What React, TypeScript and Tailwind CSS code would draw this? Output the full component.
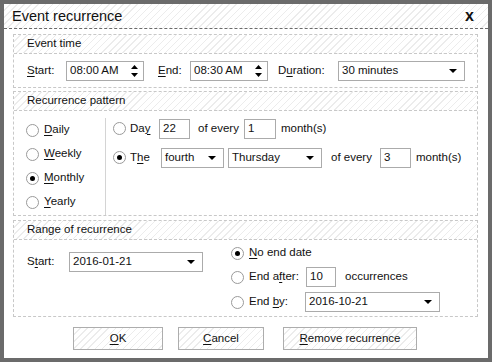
import React from "react";

const hatch =
  "bg-[repeating-linear-gradient(135deg,#ffffff_0px,#ffffff_4px,#ececec_4px,#ececec_5px)]";

function U({ pre = "", k, post = "" }: { pre?: string; k: string; post?: string }) {
  return (
    <span className="whitespace-nowrap">
      {pre}
      <span className="underline underline-offset-[2px]">{k}</span>
      {post}
    </span>
  );
}

function Radio({ checked = false }: { checked?: boolean }) {
  return (
    <span className="w-[13px] h-[13px] shrink-0 rounded-full border border-[#9a9a9a] bg-white flex items-center justify-center">
      {checked && <span className="w-[5px] h-[5px] rounded-full bg-black" />}
    </span>
  );
}

function Caret() {
  return (
    <svg width="8" height="4" viewBox="0 0 8 4" className="shrink-0">
      <path d="M0 0 H8 L4 4 Z" fill="#000" />
    </svg>
  );
}

function Input({ w, value }: { w: string; value: string }) {
  return (
    <div className={`${w} h-[20px] shrink-0 border border-[#ababab] bg-white flex items-center pl-[3px]`}>
      {value}
    </div>
  );
}

function Select({ w, value }: { w: string; value: string }) {
  return (
    <div className={`${w} h-[20px] shrink-0 border border-[#ababab] bg-white flex items-center justify-between pl-[3px] pr-[7px]`}>
      <span>{value}</span>
      <Caret />
    </div>
  );
}

function Spin({ value }: { value: string }) {
  return (
    <div className="w-[78px] h-[20px] shrink-0 border border-[#ababab] bg-white flex items-center justify-between pl-[3px] pr-[5px]">
      <span>{value}</span>
      <svg width="7" height="12" viewBox="0 0 7 12">
        <path d="M3.5 0 L7 4 H0 Z" fill="#000" />
        <path d="M0 8 H7 L3.5 12 Z" fill="#000" />
      </svg>
    </div>
  );
}

function Header({ children }: { children: React.ReactNode }) {
  return (
    <div className={`h-[19px] ${hatch} border-b border-dashed border-[#c8c8c8] pl-[13px] flex items-center`}>
      {children}
    </div>
  );
}

function Button({ w, children }: { w: string; children: React.ReactNode }) {
  return (
    <div className={`${w} h-[23px] border border-[#adadad] ${hatch} flex items-center justify-center`}>
      {children}
    </div>
  );
}

export default function App() {
  return (
    <div
      className="w-[492px] h-[362px] bg-[#6b6b6b] p-[4px] text-[11.5px] text-[#111]"
      style={{ fontFamily: '"Segoe UI", "Liberation Sans", Arial, sans-serif' }}
    >
      <div className="w-full h-full bg-white flex flex-col">
        {/* Title bar */}
        <div className={`h-[25px] shrink-0 ${hatch} border-b border-dashed border-[#6b6b6b] flex items-center justify-between pl-[8px] pr-[14px]`}>
          <span className="text-[14.5px] leading-none">Event recurrence</span>
          <span className="text-[16px] font-bold leading-none">x</span>
        </div>

        <div className="pl-[9px] pr-[10px] pt-[5px] flex flex-col">
          {/* Event time */}
          <div className="border border-dashed border-[#c8c8c8] flex flex-col">
            <Header>Event time</Header>
            <div className="h-[33px] flex items-center pl-[13px]">
              <span className="w-[39px]"><U k="S" post="tart:" /></span>
              <Spin value="08:00 AM" />
              <span className="w-[32px] ml-[14px]"><U k="E" post="nd:" /></span>
              <Spin value="08:30 AM" />
              <span className="w-[60px] ml-[10px]"><U pre="D" k="u" post="ration:" /></span>
              <Select w="w-[127px]" value="30 minutes" />
            </div>
          </div>

          {/* Recurrence pattern */}
          <div className="mt-[3px] h-[125px] border border-dashed border-[#c8c8c8] flex flex-col">
            <Header>Recurrence pattern</Header>
            <div className="flex flex-1">
              <div className="w-[92px] border-r border-[#d4d4d4] mt-[7px] pl-[12px] flex flex-col">
                <div className="h-[24px] flex items-center gap-[5px]"><Radio /><U k="D" post="aily" /></div>
                <div className="h-[24px] flex items-center gap-[5px]"><Radio /><U k="W" post="eekly" /></div>
                <div className="h-[24px] flex items-center gap-[5px]"><Radio checked /><U k="M" post="onthly" /></div>
                <div className="h-[24px] flex items-center gap-[5px]"><Radio /><U k="Y" post="early" /></div>
              </div>
              <div className="flex flex-col pl-[7px] pt-[7px]">
                <div className="h-[21px] flex items-center">
                  <Radio />
                  <span className="w-[29px] ml-[4px]"><U pre="Da" k="y" /></span>
                  <Input w="w-[31px]" value="22" />
                  <span className="w-[46px] ml-[8px]">of every</span>
                  <Input w="w-[32px]" value="1" />
                  <span className="ml-[5px]">month(s)</span>
                </div>
                <div className="h-[21px] mt-[8px] flex items-center">
                  <Radio checked />
                  <span className="w-[31px] ml-[4px]"><U pre="T" k="h" post="e" /></span>
                  <Select w="w-[63px]" value="fourth" />
                  <Select w="w-[94px] ml-[4px]" value="Thursday" />
                  <span className="w-[49px] ml-[9px]">of every</span>
                  <Input w="w-[31px]" value="3" />
                  <span className="ml-[5px]">month(s)</span>
                </div>
              </div>
            </div>
          </div>

          {/* Range of recurrence */}
          <div className="mt-[4px] h-[97px] border border-dashed border-[#c8c8c8] flex flex-col">
            <Header>Range of recurrence</Header>
            <div className="flex">
              <div className="w-[217px] pl-[13px] pt-[12px] flex items-start">
                <div className="h-[20px] flex items-center">
                  <span className="w-[42px]"><U pre="S" k="t" post="art:" /></span>
                  <Select w="w-[134px]" value="2016-01-21" />
                </div>
              </div>
              <div className="flex flex-col pt-[1px]">
                <div className="h-[24px] flex items-center">
                  <Radio checked />
                  <span className="ml-[5px]"><U k="N" post="o end date" /></span>
                </div>
                <div className="h-[24px] flex items-center">
                  <Radio />
                  <span className="ml-[5px] w-[57px]"><U pre="End a" k="f" post="ter:" /></span>
                  <Input w="w-[30px]" value="10" />
                  <span className="ml-[9px]">occurrences</span>
                </div>
                <div className="h-[24px] mt-[1px] flex items-center">
                  <Radio />
                  <span className="ml-[5px] w-[56px]"><U pre="End " k="b" post="y:" /></span>
                  <Select w="w-[135px]" value="2016-10-21" />
                </div>
              </div>
            </div>
          </div>

          {/* Buttons */}
          <div className="mt-[10px] flex pl-[60px]">
            <Button w="w-[90px]"><U k="O" post="K" /></Button>
            <div className="ml-[15px]"><Button w="w-[86px]"><U k="C" post="ancel" /></Button></div>
            <div className="ml-[19px]"><Button w="w-[134px]"><U k="R" post="emove recurrence" /></Button></div>
          </div>
        </div>
      </div>
    </div>
  );
}
